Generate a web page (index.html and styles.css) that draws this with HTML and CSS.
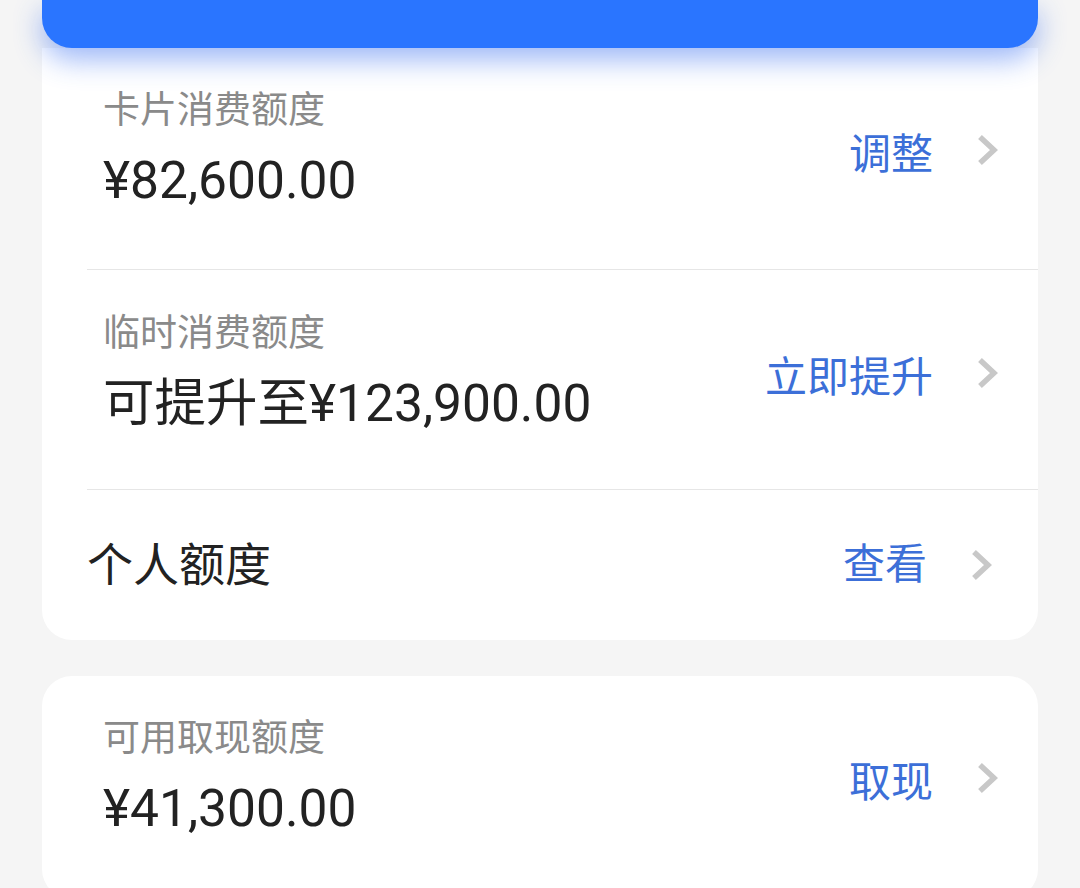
FILE: index.html
```html
<!DOCTYPE html>
<html lang="zh-CN">
<head>
<meta charset="utf-8">
<title>额度</title>
<link rel="stylesheet" href="styles.css">
</head>
<body>
<div class="page">
  <div class="banner"></div>
  <section class="card card-top">
    <div class="row row-divided row-first">
      <div class="row-inner">
        <div class="info">
          <div class="label">卡片消费额度</div>
          <div class="value">¥82,600.00</div>
        </div>
        <div class="action">
          <span class="action-text">调整</span>
          <svg class="chevron" viewBox="0 0 21 32" width="21" height="32"><polyline points="3,3 17,16 3,29"/></svg>
        </div>
      </div>
    </div>
    <div class="row row-divided">
      <div class="row-inner">
        <div class="info">
          <div class="label">临时消费额度</div>
          <div class="value">可提升至¥123,900.00</div>
        </div>
        <div class="action">
          <span class="action-text">立即提升</span>
          <svg class="chevron" viewBox="0 0 21 32" width="21" height="32"><polyline points="3,3 17,16 3,29"/></svg>
        </div>
      </div>
    </div>
    <div class="row-simple">
      <div class="simple-title">个人额度</div>
      <div class="action">
        <span class="action-text">查看</span>
        <svg class="chevron" viewBox="0 0 21 32" width="21" height="32"><polyline points="3,3 17,16 3,29"/></svg>
      </div>
    </div>
  </section>
  <section class="card card-second">
    <div class="row">
      <div class="row-inner">
        <div class="info">
          <div class="label">可用取现额度</div>
          <div class="value">¥41,300.00</div>
        </div>
        <div class="action">
          <span class="action-text">取现</span>
          <svg class="chevron" viewBox="0 0 21 32" width="21" height="32"><polyline points="3,3 17,16 3,29"/></svg>
        </div>
      </div>
    </div>
  </section>
</div>
</body>
</html>
```

FILE: styles.css
```css
html, body {
  margin: 0;
  padding: 0;
  background: #f5f5f5;
  font-family: "Roboto", "Noto Sans CJK SC", sans-serif;
  overflow: hidden;
}

.page {
  width: 996px;
  margin-left: 42px;
  display: flex;
  flex-direction: column;
}

.banner {
  height: 48px;
  background: #2a75ff;
  border-radius: 0 0 30px 30px;
  position: relative;
  z-index: 1;
  box-shadow: 0 12px 28px rgba(42, 100, 240, 0.45);
}

.card {
  background: #ffffff;
  border-radius: 30px;
}

.card-top {
  border-radius: 0 0 30px 30px;
}

.card-second {
  margin-top: 36px;
  padding-bottom: 60px;
}

.row {
  margin-left: 45px;
}

.row-divided {
  border-bottom: 1px solid #e6e6e6;
}

.row-inner {
  display: flex;
  align-items: center;
  justify-content: space-between;
  padding: 42px 40px 55px 16px;
}

.row-first .row-inner {
  padding-top: 41px;
  padding-bottom: 58px;
}

.card-second .row-inner {
  padding-top: 41px;
  padding-bottom: 0;
}

.info {
  display: flex;
  flex-direction: column;
}

.label {
  font-size: 37px;
  line-height: 44px;
  color: #8a8a8a;
  margin-bottom: 18px;
}

.value {
  font-size: 51.5px;
  line-height: 60px;
  color: #222222;
}

.action {
  display: flex;
  align-items: center;
  gap: 44px;
}

.action-text {
  font-size: 42px;
  line-height: 50px;
  margin-top: 9px;
  color: #3c6fd8;
}

.chevron {
  display: block;
  fill: none;
  stroke: #c8c8c8;
  stroke-width: 5.5;
}

.row-simple {
  height: 150px;
  display: flex;
  align-items: center;
  justify-content: space-between;
  padding: 0 46px 0 45px;
}

.row-simple .action-text {
  margin-top: 0;
}

.simple-title {
  font-size: 46px;
  line-height: 54px;
  color: #222222;
}
```
